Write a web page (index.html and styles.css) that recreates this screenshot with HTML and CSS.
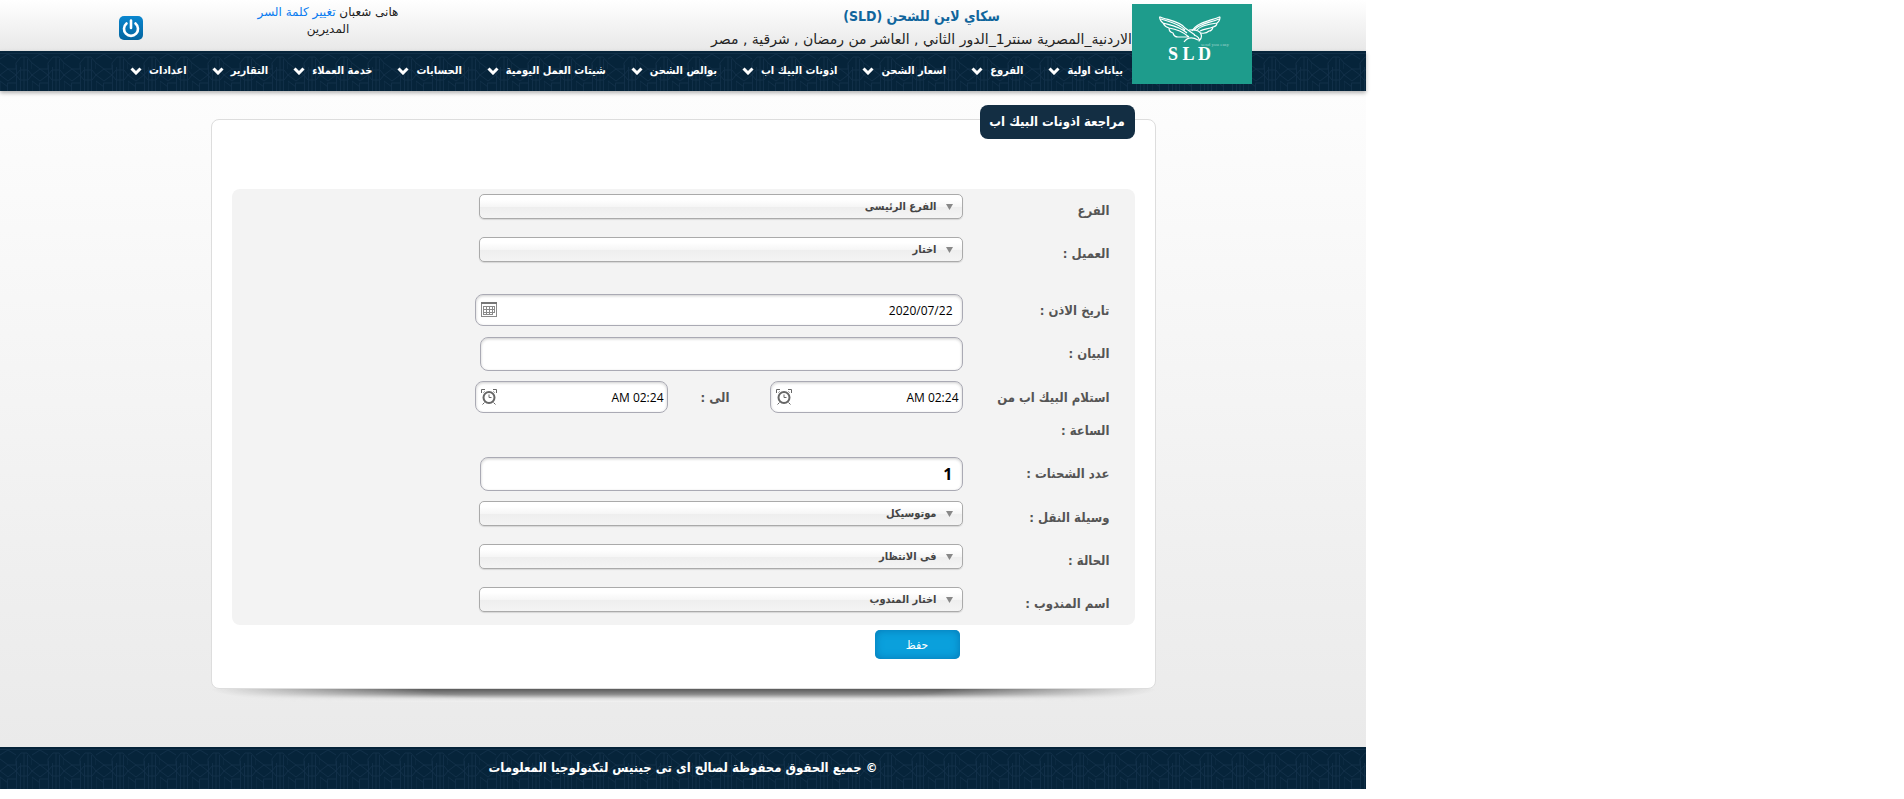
FILE: index.html
```html
<!DOCTYPE html>
<html lang="ar">
<head>
<meta charset="utf-8">
<title>مراجعة اذونات البيك اب</title>
<link rel="stylesheet" href="styles.css">
</head>
<body>
<div class="page" dir="rtl">
  <header class="header">
    <div class="container header-row">
      <a class="logo" href="#" aria-label="SLD">
        <svg viewBox="0 0 120 80" aria-hidden="true">
          <g fill="none" stroke="#fff" stroke-width="1.2" stroke-linejoin="round">
            <path d="M27.500 12.700C35 16 48 17 53 24L63 31M27.500 12.700Q28 17 31 19Q33 23 37 24Q37 28 41 29Q42 33 46 33H57M31 19C38 21 47 22 55 29M37 24C44 25 50 27 57 33M29 15C38 18 46 19 53 26"/>
            <path d="M88 12.700C78 17 65 18 60 27M88 12.700Q88 17 85 19Q85 22 81 23Q80 27 77 27Q74 30 69 29M85 19C77 20 68 22 65 26M81 23C76 25 72 25 68 27M87 15C78 19 68 19 62 26"/>
            <path d="M57 26Q69 25 69.500 32Q69.500 35 67 37Q68 33 62 31M52 38Q57 31 66 36"/>
          </g>
          <text class="logo-name" x="36" y="56">S L D</text>
          <text class="logo-tag" x="69" y="42">send you easy</text>
        </svg>
      </a>
      <div class="company">
        <h1 class="company-name">سكاي لاين للشحن (SLD)</h1>
        <p class="company-address">الاردنية_المصرية سنتر1_الدور الثاني , العاشر من رمضان , شرقية , مصر</p>
      </div>
      <div class="user">هانى شعبان <a href="#">تغيير كلمة السر</a><br>المديرين</div>
      <button class="power" type="button" aria-label="خروج">
        <svg viewBox="0 0 24 24" aria-hidden="true"><path d="M7.500 7.500 A7 7 0 1 0 16.500 7.500 M12 4.500 V12" fill="none" stroke="#fff" stroke-width="2.600" stroke-linecap="round"/></svg>
      </button>
    </div>
  </header>
  <nav class="nav">
    <div class="container nav-row">
      <a href="#">بيانات اولية<svg viewBox="0 0 12 8"><path d="M1.500 1.500 L6 6 L10.500 1.500"/></svg></a>
      <a href="#">الفروع<svg viewBox="0 0 12 8"><path d="M1.500 1.500 L6 6 L10.500 1.500"/></svg></a>
      <a href="#">اسعار الشحن<svg viewBox="0 0 12 8"><path d="M1.500 1.500 L6 6 L10.500 1.500"/></svg></a>
      <a href="#">اذونات البيك اب<svg viewBox="0 0 12 8"><path d="M1.500 1.500 L6 6 L10.500 1.500"/></svg></a>
      <a href="#">بوالص الشحن<svg viewBox="0 0 12 8"><path d="M1.500 1.500 L6 6 L10.500 1.500"/></svg></a>
      <a href="#">شيتات العمل اليومية<svg viewBox="0 0 12 8"><path d="M1.500 1.500 L6 6 L10.500 1.500"/></svg></a>
      <a href="#">الحسابات<svg viewBox="0 0 12 8"><path d="M1.500 1.500 L6 6 L10.500 1.500"/></svg></a>
      <a href="#">خدمة العملاء<svg viewBox="0 0 12 8"><path d="M1.500 1.500 L6 6 L10.500 1.500"/></svg></a>
      <a href="#">التقارير<svg viewBox="0 0 12 8"><path d="M1.500 1.500 L6 6 L10.500 1.500"/></svg></a>
      <a href="#">اعدادات<svg viewBox="0 0 12 8"><path d="M1.500 1.500 L6 6 L10.500 1.500"/></svg></a>
    </div>
  </nav>
  <main class="main">
    <form class="card">
      <h2 class="card-title">مراجعة اذونات البيك اب</h2>
      <div class="panel">
        <div class="row">
          <label for="branch">الفرع</label>
          <div class="field"><select id="branch"><option>الفرع الرئيسى</option></select></div>
        </div>
        <div class="row row-spaced">
          <label for="client">العميل :</label>
          <div class="field"><select id="client"><option>اختار</option></select></div>
        </div>
        <div class="row">
          <label for="date">تاريخ الاذن :</label>
          <div class="field picker picker-date">
            <input id="date" type="text" value="2020/07/22">
            <svg viewBox="0 0 16 16" shape-rendering="crispEdges" aria-hidden="true"><path fill="#fff" stroke="#8a8a8a" d="M.5 1.500h15v13H.5z"/><path fill="#777" d="M0 0h16v2H0z"/><path stroke="#8a8a8a" fill="none" d="M2 4.500h12M2 7.500h12M2 10.500h12M2.500 4v9M5.500 4v9M8.500 4v9M11.500 4v9M13.500 4v7M2 12.500h10"/></svg>
          </div>
        </div>
        <div class="row">
          <label for="note">البيان :</label>
          <div class="field"><input class="text" id="note" type="text"></div>
        </div>
        <div class="row">
          <label for="from">استلام البيك اب من الساعة :</label>
          <div class="field times">
            <div class="picker">
              <input id="from" type="text" value="AM 02:24">
              <svg viewBox="0 0 16 16" aria-hidden="true"><g fill="none" stroke="#666"><circle cx="8" cy="8.500" r="5.500" stroke-width="2"/><path d="M8 5.500v3h2.500M.5 4V.5H4M12 .5h3.500V4M2.500 3.500l1-1M13.500 3.500l-1-1M3.500 13.500l-2 2M12.500 13.500l2 2"/></g></svg>
            </div>
            <label class="to" for="until">الى :</label>
            <div class="picker">
              <input id="until" type="text" value="AM 02:24">
              <svg viewBox="0 0 16 16" aria-hidden="true"><g fill="none" stroke="#666"><circle cx="8" cy="8.500" r="5.500" stroke-width="2"/><path d="M8 5.500v3h2.500M.5 4V.5H4M12 .5h3.500V4M2.500 3.500l1-1M13.500 3.500l-1-1M3.500 13.500l-2 2M12.500 13.500l2 2"/></g></svg>
            </div>
          </div>
        </div>
        <div class="row">
          <label for="count">عدد الشحنات :</label>
          <div class="field"><input class="text count" id="count" type="text" value="1"></div>
        </div>
        <div class="row">
          <label for="vehicle">وسيلة النقل :</label>
          <div class="field"><select id="vehicle"><option>موتوسيكل</option></select></div>
        </div>
        <div class="row">
          <label for="status">الحالة :</label>
          <div class="field"><select id="status"><option>فى الانتظار</option></select></div>
        </div>
        <div class="row">
          <label for="agent">اسم المندوب :</label>
          <div class="field"><select id="agent"><option>اختار المندوب</option></select></div>
        </div>
      </div>
      <button class="save" type="submit">حفظ</button>
    </form>
    <div class="card-shadow"></div>
  </main>
  <footer class="footer">© جميع الحقوق محفوظة لصالح اى تى جينيس لتكنولوجيا المعلومات</footer>
</div>
</body>
</html>
```
FILE: styles.css
```css
* { box-sizing: border-box; }
body {
  margin: 0;
  background: #fff;
  font-family: "DejaVu Sans Condensed", "DejaVu Sans", sans-serif;
  font-size: 12px;
  color: #333;
}
a { text-decoration: none; color: inherit; }
h1, h2, p { margin: 0; }
button, input, select { font-family: inherit; margin: 0; }

.page { max-width: 1366px; }
.container { max-width: 1138px; margin: 0 auto; }

.header { height: 51px; background: linear-gradient(#fff, #e8e8e8); }
.header-row { display: flex; align-items: flex-start; }
.logo {
  width: 120px;
  height: 80px;
  margin-top: 4px;
  background: #1e9c8c;
  position: relative;
  z-index: 2;
}
.logo svg { display: block; width: 100%; height: 100%; }
.logo-name { font: bold 18px "Liberation Serif", serif; fill: #fff; }
.logo-tag { font: 5px "Liberation Serif", serif; fill: #9fd3cc; }
.logo text { direction: ltr; }
.company { text-align: center; padding-top: 5px; white-space: nowrap; }
.company-name { font-size: 14px; line-height: 22px; color: #10659c; font-weight: bold; }
.company-address { font-family: "DejaVu Sans", sans-serif; font-size: 14px; line-height: 25px; color: #222; }
.user {
  width: 200px;
  margin-inline: auto 85px;
  padding-top: 4px;
  text-align: center;
  font-family: "DejaVu Sans", sans-serif;
  font-size: 12px;
  line-height: 17px;
  color: #222;
}
.user a { color: #0a7cf0; }
.power {
  width: 24px;
  height: 24px;
  margin: 16px 0 0 5px;
  padding: 0;
  border: 0;
  border-radius: 5px;
  background: linear-gradient(#0a86cf, #04659f);
}
.power svg { display: block; }

.nav, .footer {
  background: #06243a url("data:image/svg+xml,%3Csvg xmlns='http://www.w3.org/2000/svg' width='32' height='42'%3E%3Cg fill='none' stroke='%23112f48'%3E%3Cpath d='M0 2.500h32M16.500 14v28M20.500 16v26M27.500 8v34M16 18V12l5-6h6l5 6v6M0 12l8 6M0 8l8-5 8 5M0 24l8-6 8 6-8 6zM8 18h8M16 24l4-5h8l4 5-4 5h-8zM7.500 32h9v10h-9zM0 42V30M0 30l8 6M24 6v36'/%3E%3C/g%3E%3C/svg%3E");
  color: #fff;
}
.nav { position: relative; z-index: 1; box-shadow: 0 2px 4px rgba(0,0,0,.3); }
.nav-row {
  display: flex;
  justify-content: space-between;
  padding: 0 129px 0 16px;
  font-size: 11px;
  line-height: 40px;
  font-weight: bold;
  white-space: nowrap;
}
.nav a { display: flex; align-items: center; gap: 7px; }
.nav svg { width: 12px; height: 8px; fill: none; stroke: #fff; stroke-width: 3; }

.main { padding: 28px 16px 45px; background: linear-gradient(#fdfdfd, #eaeaea); }
.card, .card-shadow { max-width: 945px; margin: 0 auto; }
.card {
  padding: 0 20px 29px;
  background: #fff;
  border: 1px solid #ddd;
  border-radius: 8px;
}
.card-title {
  width: fit-content;
  min-width: 155px;
  margin: -15px 0 50px;
  padding: 0 8px;
  border-radius: 8px;
  background: #132e43;
  color: #fff;
  font-size: 13px;
  line-height: 34px;
  text-align: center;
}
.panel { padding: 5px 25px 5px 20px; background: #f3f3f3; border-radius: 8px; }
.row {
  display: grid;
  grid-template-columns: 132px minmax(0, 488px);
  column-gap: 15px;
  align-items: start;
  margin-bottom: 10px;
}
.row:last-child { margin-bottom: 0; }
.row-spaced { margin-bottom: 24px; }
label { font-size: 13px; font-weight: bold; line-height: 33px; color: #555; }
.field { display: flex; }
select {
  appearance: none;
  flex: 1;
  height: 25px;
  margin-left: 4px;
  padding: 0 25px;
  border: 1px solid #aaa;
  border-radius: 5px;
  background:
    url("data:image/svg+xml,%3Csvg xmlns='http://www.w3.org/2000/svg' width='7' height='6'%3E%3Cpath fill='%23888' d='M0 0h7L3.500 6z'/%3E%3C/svg%3E") right 9px center no-repeat,
    linear-gradient(#fff 20%, #f6f6f6 50%, #eee 52%, #f4f4f4);
  box-shadow: 0 1px 1px rgba(0,0,0,.12);
  color: #444;
  font-size: 11px;
  font-weight: bold;
}
input {
  width: 100%;
  height: 32px;
  padding: 0 9px;
  border: 1px solid #aaaab4;
  border-radius: 8px;
  background: #fff;
  box-shadow: inset 0 1px 3px rgba(0,0,0,.2);
  color: #000;
  font-family: "Open Sans", sans-serif;
  font-size: 12px;
}
.text { height: 34px; margin-left: 5px; }
.count { font: bold 16px "Open Sans", sans-serif; }
.picker { display: grid; flex: 1; align-items: center; }
.picker > * { grid-area: 1 / 1; }
.picker svg { width: 16px; height: 16px; margin-left: 6px; justify-self: end; }
.times { align-items: flex-start; }
.times .picker { flex: 0 1 193px; }
.times input { padding: 0 3px; direction: ltr; text-align: right; }
.to { width: 62px; margin-inline-start: 40px; }
.save {
  display: block;
  width: 85px;
  height: 29px;
  margin: 5px 175px 0 0;
  border: 0;
  border-radius: 5px;
  background: #0aa0dc;
  box-shadow: inset 0 0 8px #0677b4;
  color: #fff;
  font-size: 12px;
}
.card-shadow {
  height: 13px;
  background: linear-gradient(#5a5a5a, #8a8a8a 40%, #e0e0e0 75%, #f2f2f2);
  mask-image: radial-gradient(50% 180% at 50% 0, #000 55%, transparent);
}
.footer { text-align: center; font-size: 13px; font-weight: bold; line-height: 42px; }
```
